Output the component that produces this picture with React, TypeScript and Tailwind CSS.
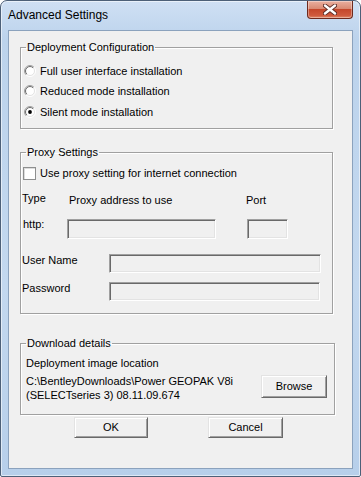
import type { ReactNode } from "react";

const sans = "font-['Liberation_Sans',Arial,sans-serif]";

// classic 3D edges
const sunken =
  "border border-t-[#a0a0a0] border-l-[#a0a0a0] border-r-white border-b-white shadow-[inset_1px_1px_0_#696969,inset_-1px_-1px_0_#e3e3e3]";
const raised =
  "border border-t-[#e3e3e3] border-l-[#e3e3e3] border-r-[#696969] border-b-[#696969] shadow-[inset_1px_1px_0_#ffffff,inset_-1px_-1px_0_#a0a0a0]";

function Radio({ gid, checked }: { gid: string; checked?: boolean }) {
  return (
    <svg width="12" height="12" viewBox="0 0 12 12" className="shrink-0">
      <defs>
        <linearGradient id={`${gid}-o`} x1="0" y1="0" x2="1" y2="1">
          <stop offset="0.48" stopColor="#a0a0a0" />
          <stop offset="0.52" stopColor="#ffffff" />
        </linearGradient>
        <linearGradient id={`${gid}-i`} x1="0" y1="0" x2="1" y2="1">
          <stop offset="0.48" stopColor="#696969" />
          <stop offset="0.52" stopColor="#e3e3e3" />
        </linearGradient>
      </defs>
      <circle cx="6" cy="6" r="5.5" fill="none" stroke={`url(#${gid}-o)`} />
      <circle cx="6" cy="6" r="4.5" fill="#ffffff" stroke={`url(#${gid}-i)`} />
      {checked && <circle cx="6" cy="6" r="1.9" fill="#000000" />}
    </svg>
  );
}

function RadioRow({ gid, label, checked, h }: { gid: string; label: string; checked?: boolean; h: string }) {
  return (
    <div className={`flex items-center gap-[4px] ${h}`}>
      <Radio gid={gid} checked={checked} />
      <span className="leading-[13px]">{label}</span>
    </div>
  );
}

function Group({ title, className, children }: { title: string; className: string; children: ReactNode }) {
  return (
    <fieldset
      className={`border border-[#a0a0a0] shadow-[inset_1px_1px_0_#ffffff,1px_1px_0_#ffffff] ${className}`}
    >
      <legend className="ml-[5px] px-[1px] leading-[13px]">{title}</legend>
      {children}
    </fieldset>
  );
}

function Field({ className }: { className: string }) {
  return <div className={`bg-[#f0f0f0] ${sunken} ${className}`} />;
}

function Button({ label, className }: { label: string; className: string }) {
  return (
    <button
      className={`flex items-center justify-center bg-[#f0f0f0] leading-[13px] text-black ${raised} ${className}`}
    >
      {label}
    </button>
  );
}

export default function App() {
  return (
    <div className={`w-[361px] h-[477px] bg-white text-[11px] text-black ${sans}`}>
      <div className="w-[361px] h-[477px] flex flex-col rounded-t-[7px] rounded-b-[2px] border border-[#4d6078] bg-[linear-gradient(180deg,#cfe0f4_0%,#bcd3ec_8%,#c3d8ef_60%,#b7cfea_100%)] shadow-[inset_0_0_0_1px_rgba(255,255,255,0.55)] px-[7px] pb-[7px]">
        {/* title bar */}
        <div className="h-[29px] flex items-start">
          <span className="mt-[7px] text-[12px] leading-[14px] text-black">Advanced Settings</span>
          <button className="ml-auto w-[46px] h-[18px] rounded-b-[4px] border border-t-0 border-[#6e2a1e] bg-[linear-gradient(180deg,#eab0a0_0%,#d98a73_45%,#c5472b_50%,#cf5a3d_85%,#e08a6a_100%)] shadow-[inset_0_0_0_1px_rgba(255,255,255,0.35)] flex items-center justify-center">
            <svg width="14" height="11" viewBox="0 0 14 11">
              <path d="M2 1.5 L12 9.5 M12 1.5 L2 9.5" stroke="#5a2a24" strokeWidth="4.2" strokeLinecap="round" />
              <path d="M2 1.5 L12 9.5 M12 1.5 L2 9.5" stroke="#ffffff" strokeWidth="2.4" strokeLinecap="round" />
            </svg>
          </button>
        </div>

        {/* client area */}
        <div className="flex-1 flex flex-col border border-[#8ba2bd] bg-[#f0f0f0] pl-[11px] pt-[10px]">
          <Group title="Deployment Configuration" className="w-[313px] h-[88px]">
            <div className="flex flex-col pl-[3px] pt-[7px]">
              <RadioRow gid="r1" label="Full user interface installation" h="h-[20px]" />
              <RadioRow gid="r2" label="Reduced mode installation" h="h-[20px]" />
              <RadioRow gid="r3" label="Silent mode installation" checked h="h-[22px]" />
            </div>
          </Group>

          <Group title="Proxy Settings" className="mt-[17px] w-[313px] h-[168px]">
            <div className="flex flex-col">
              <div className="mt-[4px] h-[20px] flex items-center gap-[4px] pl-[2px]">
                <div className="w-[13px] h-[13px] border border-[#8e8f8f] bg-white shadow-[inset_1px_1px_0_#dcdcdc]" />
                <span className="leading-[13px]">Use proxy setting for internet connection</span>
              </div>
              <div className="mt-[9px] h-[15px] flex items-start pl-[1px]">
                <span className="w-[47px] leading-[13px]">Type</span>
                <span className="w-[177px] mt-[2px] leading-[13px]">Proxy address to use</span>
                <span className="mt-[2px] leading-[13px]">Port</span>
              </div>
              <div className="mt-[12px] flex items-start pl-[2px]">
                <span className="w-[44px] -mt-[1px] leading-[13px]">http:</span>
                <Field className="w-[149px] h-[20px]" />
                <Field className="ml-[31px] w-[41px] h-[20px]" />
              </div>
              <div className="mt-[15px] flex items-start pl-[1px]">
                <span className="w-[87px] leading-[13px]">User Name</span>
                <Field className="w-[212px] h-[19px]" />
              </div>
              <div className="mt-[9px] flex items-start pl-[1px]">
                <span className="w-[87px] leading-[13px]">Password</span>
                <Field className="w-[211px] h-[19px]" />
              </div>
            </div>
          </Group>

          <Group title="Download details" className="mt-[23px] w-[315px] h-[78px]">
            <div className="flex flex-col pl-[5px] pr-[7px]">
              <div className="mt-[7px] leading-[13px]">Deployment image location</div>
              <div className="mt-[4px] flex items-start justify-between">
                <div className="leading-[14px]">
                  C:\BentleyDownloads\Power GEOPAK V8i
                  <br />
                  (SELECTseries 3) 08.11.09.674
                </div>
                <Button label="Browse" className="mt-[1px] w-[66px] h-[23px]" />
              </div>
            </div>
          </Group>

          <div className="mt-[2px] flex">
            <Button label="OK" className="ml-[54px] w-[74px] h-[21px]" />
            <Button label="Cancel" className="ml-[60px] w-[75px] h-[21px]" />
          </div>
        </div>
      </div>
    </div>
  );
}
